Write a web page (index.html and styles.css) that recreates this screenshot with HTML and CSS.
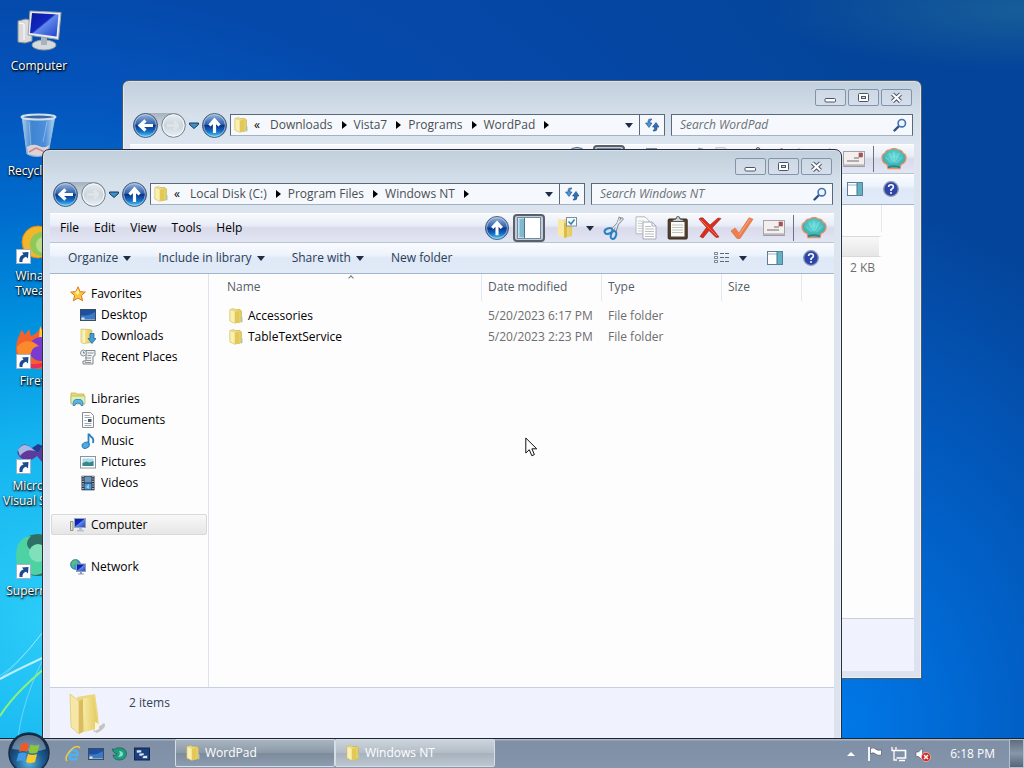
FILE: index.html
```html
<!DOCTYPE html>
<html lang="en">
<head>
    <meta charset="UTF-8">
    <meta name="viewport" content="width=device-width, initial-scale=1.0">
    <title>Windows NT</title>
    <link rel="stylesheet" href="styles.css">
</head>
<body>
    <!-- icon definitions -->
    <svg class="defs" aria-hidden="true">
        <defs>
            <linearGradient id="orbBlue" x1="0" y1="0" x2="0" y2="1">
                <stop offset="0" stop-color="#9db8dc"/>
                <stop offset=".45" stop-color="#2f62ae"/>
                <stop offset=".5" stop-color="#0b3284"/>
                <stop offset=".75" stop-color="#1470c8"/>
                <stop offset="1" stop-color="#5ad4fa"/>
            </linearGradient>
            <linearGradient id="glass" x1="0" y1="0" x2="0" y2="1">
                <stop offset="0" stop-color="#e6ecf1"/>
                <stop offset=".5" stop-color="#ccd5dd"/>
                <stop offset="1" stop-color="#e9eff4"/>
            </linearGradient>
            <linearGradient id="gold" x1="0" y1="0" x2="1" y2="0">
                <stop offset="0" stop-color="#f8edaa"/>
                <stop offset="1" stop-color="#e3c95a"/>
            </linearGradient>
            <linearGradient id="screen" x1="0" y1="0" x2="1" y2="1">
                <stop offset="0" stop-color="#0a1c9c"/>
                <stop offset=".45" stop-color="#1226c0"/>
                <stop offset=".5" stop-color="#5f88ea"/>
                <stop offset="1" stop-color="#2040cc"/>
            </linearGradient>
            <linearGradient id="bin" x1="0" y1="0" x2="1" y2="0">
                <stop offset="0" stop-color="#a9cdf0"/>
                <stop offset=".3" stop-color="#3f84d0"/>
                <stop offset=".7" stop-color="#4c8eda"/>
                <stop offset="1" stop-color="#b7d8f4"/>
            </linearGradient>
            <radialGradient id="shell" cx=".5" cy=".4" r=".6">
                <stop offset="0" stop-color="#6be0dc"/>
                <stop offset="1" stop-color="#2fa2a6"/>
            </radialGradient>
            <radialGradient id="start" cx=".5" cy=".75" r=".7">
                <stop offset="0" stop-color="#57b3dd"/>
                <stop offset=".5" stop-color="#1d5c92"/>
                <stop offset="1" stop-color="#0c2748"/>
            </radialGradient>
        </defs>

        <symbol id="i-back" viewBox="0 0 25 25">
            <circle cx="12.5" cy="12.5" r="12" fill="url(#orbBlue)" stroke="#4c6076"/>
            <circle cx="12.5" cy="12.5" r="10.8" fill="none" stroke="#c3d6ea" stroke-opacity=".7"/>
            <path d="M20 12.5H8M12.5 7.5L7 12.5l5.5 5" fill="none" stroke="#fff" stroke-width="3.2"/>
        </symbol>
        <symbol id="i-forward" viewBox="0 0 25 25">
            <circle cx="12.5" cy="12.5" r="11.8" fill="url(#glass)" stroke="#76828e"/>
            <circle cx="12.5" cy="12.5" r="10.5" fill="none" stroke="#f4f8fa"/>
            <path d="M6 12.5h11M13 8.5l4 4-4 4" fill="none" stroke="#dfe6eb" stroke-width="2.5"/>
        </symbol>
        <symbol id="i-up" viewBox="0 0 25 25">
            <circle cx="12.5" cy="12.5" r="12" fill="url(#orbBlue)" stroke="#4c6076"/>
            <circle cx="12.5" cy="12.5" r="10.8" fill="none" stroke="#c3d6ea" stroke-opacity=".7"/>
            <path d="M12.5 20V8M7.5 12.5l5-5.5 5 5.5" fill="none" stroke="#fff" stroke-width="3.2"/>
        </symbol>
        <symbol id="i-history" viewBox="0 0 10 7">
            <path d="M.5 1h9v1.500L5 6.500.5 2.500z" fill="#3d8fc4" stroke="#17375a"/>
        </symbol>
        <symbol id="i-folder" viewBox="0 0 16 16">
            <path d="M2 1.500l4-1 1 1h5l1.500 1.500v10l-2 1.500H6L2 13z" fill="url(#gold)" stroke="#c9b04c" stroke-width=".6"/>
            <path d="M2 1.500l5 1.500v12.500L2 13z" fill="#f9efae" stroke="#d8c260" stroke-width=".5"/>
            <path d="M7 4l4-1.500v12L7 15.500z" fill="#e2c858"/>
            <path d="M13 8.500l1.500 1v4L13 15z" fill="#a9c9b0"/>
        </symbol>
        <symbol id="i-refresh" viewBox="0 0 16 16">
            <path d="M8 2H6Q4 2 4 4.500V6H1.500L5 10.500 8 6H6V4.500z" fill="#4f93d0" stroke="#1f4e86" stroke-width=".6"/>
            <path d="M9 14h1.500Q13 14 13 11.500V10h2L12 5.500 8.500 10h2v2z" fill="#2f74ba" stroke="#17406f" stroke-width=".6"/>
        </symbol>
        <symbol id="i-search" viewBox="0 0 14 14">
            <path d="M1.500 12.500L6 8" stroke="#2f4f86" stroke-width="2.400" stroke-linecap="round"/>
            <circle cx="8.800" cy="5.200" r="3.700" fill="#eef6ff" stroke="#4272b4" stroke-width="1.600"/>
        </symbol>
        <symbol id="i-min" viewBox="0 0 13 11">
            <rect x="1" y="6.500" width="10.500" height="3.500" rx="1" fill="#fff" stroke="#4a5568"/>
        </symbol>
        <symbol id="i-max" viewBox="0 0 13 11">
            <rect x="1.500" y="1.500" width="10" height="8" rx="1" fill="#fff" stroke="#4a5568"/>
            <rect x="4.500" y="4.500" width="4" height="2" fill="#d4dde8" stroke="#4a5568"/>
        </symbol>
        <symbol id="i-close" viewBox="0 0 13 11">
            <path d="M2.500 2l8 7.500M10.500 2l-8 7.500" stroke="#4a5568" stroke-width="4.200"/>
            <path d="M2.500 2l8 7.500M10.500 2l-8 7.500" stroke="#fff" stroke-width="2.200"/>
        </symbol>

        <symbol id="i-pane" viewBox="0 0 24 22">
            <rect x=".5" y=".5" width="23" height="21" fill="#fff" stroke="#6d8ba2"/>
            <rect x="1.500" y="1.500" width="6" height="19" fill="#7fb9d0"/>
            <path d="M7.500 1v20" stroke="#48758e"/>
            <path d="M2 1.500v19" stroke="#c6e4ee"/>
        </symbol>
        <symbol id="i-props" viewBox="0 0 22 22">
            <path d="M2 2l5 1 2-1 7 1v16l-8 2-6-3z" fill="url(#gold)"/>
            <path d="M2 2l6 3v16l-6-3z" fill="#f7eaa0"/>
            <path d="M8 6l3-1v15l-3 1z" fill="#dcbc48"/>
            <rect x="10.500" y=".5" width="10" height="8.500" fill="#f6fafc" stroke="#7c8f9c"/>
            <path d="M12.500 4.500l2.500 2.500 3.500-4.500" fill="none" stroke="#2c83ac" stroke-width="1.500"/>
        </symbol>
        <symbol id="i-cut" viewBox="0 0 22 24">
            <path d="M9 14L20 2M12 16L17 1" stroke="#7d8894" stroke-width="2.600"/>
            <path d="M9.500 13.500L19.500 2.500M12 15L16.600 2" stroke="#e3e9ee" stroke-width="1.200"/>
            <ellipse cx="5.500" cy="15" rx="4" ry="2.600" transform="rotate(-20 5.500 15)" fill="none" stroke="#2a80c0" stroke-width="2"/>
            <ellipse cx="10.500" cy="19" rx="2.500" ry="4" transform="rotate(20 10.500 19)" fill="none" stroke="#2a80c0" stroke-width="2"/>
        </symbol>
        <symbol id="i-copy" viewBox="0 0 22 24">
            <path d="M1 .8h9l4 4v13H1z" fill="#fafafa" stroke="#b4babf"/>
            <path d="M3 5h6M3 7.500h8M3 10h8M3 12.500h8M3 15h8" stroke="#cdd2d6"/>
            <path d="M8 6h9l4 4v13H8z" fill="#fff" stroke="#a4abb2"/>
            <path d="M17 6v4h4" fill="none" stroke="#a4abb2"/>
            <path d="M10 10.500h6M10 13h9M10 15.500h9M10 18h9M10 20.500h9" stroke="#b8bec4"/>
        </symbol>
        <symbol id="i-paste" viewBox="0 0 22 24">
            <rect x="1.200" y="3" width="19" height="20" rx="1" fill="#54402e" stroke="#33261a"/>
            <rect x="4" y="6" width="13.500" height="14.500" fill="#fbfbf8"/>
            <path d="M5 9h11M5 11.500h11M5 14h11M5 16.500h11" stroke="#c2c2c0"/>
            <path d="M5 5.500Q6 3 9 3q0-2.500 2-2.500T13 3q3 0 4 2.500z" fill="#cfd2d4" stroke="#555"/>
        </symbol>
        <symbol id="i-delete" viewBox="0 0 24 22">
            <path d="M1 2q2-2 4-1l7 7 8-7 3 .5L14 11l7 9-3 .5-7-7-6 7.500-3-1.500 6.500-9z" fill="#d8301c" stroke="#a81a10" stroke-width=".6"/>
            <path d="M2.500 2.500L19 19" stroke="#f46a52" stroke-width="1"/>
        </symbol>
        <symbol id="i-check" viewBox="0 0 24 22">
            <path d="M1 14l4-3 4 5L19 .8l4 1.400L10 21.500H7z" fill="#ee7f4c" stroke="#d87444" stroke-width=".7"/>
            <path d="M9 18L20 2" stroke="#f8a67c" stroke-width="1"/>
        </symbol>
        <symbol id="i-mail" viewBox="0 0 22 16">
            <rect x=".5" y=".5" width="21" height="13.500" fill="#f2efee" stroke="#a6a3a6"/>
            <path d="M0 15.300h22" stroke="#8f8d92"/>
            <rect x="16" y="2" width="3.500" height="4" fill="#c5434e" stroke="#7d5b62" stroke-width=".6"/>
            <path d="M4 10h12M11 7h5" stroke="#9a979c" stroke-width="1.500"/>
        </symbol>
        <symbol id="i-shell" viewBox="0 0 26 22">
            <path d="M7 20.500l-1-4Q1 15 1 9.500q0-3 3-4.500 1-3 5-3.200Q11 .5 13 .5t4 1.300q4 .2 5 3.200 3 1.500 3 4.500 0 5.500-5 7l-1 4z" fill="url(#shell)" stroke="#ec9064" stroke-width="1.300"/>
            <path d="M4.500 9l6 6M8 5l4 9M13 3.500v11M18 5l-4 9M21.500 9l-6 6" stroke="#9df0ea" stroke-opacity=".5"/>
            <path d="M7 19.500q6-3 12 0" fill="none" stroke="#2a8088" stroke-width="1.600"/>
        </symbol>
        <symbol id="i-views" viewBox="0 0 16 12">
            <path d="M.5.5h3v2h-3zM.5 4.500h3v2h-3zM.5 8.500h3v2h-3z" fill="#fff" stroke="#5b6878" stroke-width=".8"/>
            <path d="M6 1.500h10M6 5.500h10M6 9.500h10" stroke="#5b6878" stroke-dasharray="4 1"/>
        </symbol>
        <symbol id="i-preview" viewBox="0 0 16 14">
            <rect x=".5" y=".5" width="15" height="13" fill="#fdfeff" stroke="#5c7f96"/>
            <path d="M1 3h9" stroke="#9db6c6"/>
            <rect x="10" y="1" width="5" height="12" fill="#5fb3c4"/>
            <path d="M10 1v12" stroke="#47758c"/>
        </symbol>
        <symbol id="i-help" viewBox="0 0 16 16">
            <circle cx="8" cy="8" r="7.300" fill="#2d45a8" stroke="#8b98b4" stroke-width="1.300"/>
            <path d="M5.600 6Q5.600 3.800 8 3.800T10.400 6Q10.400 7.200 8 8.600V10" fill="none" stroke="#fff" stroke-width="1.600"/>
            <circle cx="8" cy="12" r="1" fill="#fff"/>
        </symbol>

        <symbol id="i-star" viewBox="0 0 16 16">
            <path d="M8 .8l2.100 4.900 5.200.4-4 3.400 1.300 5.300L8 12l-4.600 2.800 1.300-5.300-4-3.400 5.200-.4z" fill="#fbc83c" stroke="#d9791f"/>
            <path d="M8 3l1.300 3.600L8 9 5 7z" fill="#fdf0a0"/>
        </symbol>
        <symbol id="i-desktop" viewBox="0 0 16 16">
            <rect x=".5" y="2.500" width="15" height="11" fill="#1f4f9f" stroke="#3c4c60"/>
            <path d="M1 12V8q6 2 14-3v7z" fill="#3a78c8"/>
            <path d="M1 12.500h14" stroke="#8ea4b9"/>
            <path d="M1.500 10.500h3v2h-3z" fill="#d9e8f5"/>
        </symbol>
        <symbol id="i-downloads" viewBox="0 0 16 16">
            <path d="M1 1l9 .5 2 1v12l-9 1L1 14z" fill="url(#gold)" stroke="#c9b04c" stroke-width=".6"/>
            <path d="M4 2v13" stroke="#f9f2bc" stroke-width="2"/>
            <path d="M10 5.500h4v5h2L12 15.500l-4-5h2z" fill="#3f9fd8" stroke="#1f5f9c" stroke-width=".7"/>
        </symbol>
        <symbol id="i-recent" viewBox="0 0 16 16">
            <path d="M6 1.500h9v5l-2 1v7.500H3v-3h3z" fill="#f1f1f1" stroke="#7f878f"/>
            <path d="M7.500 4h6M7.500 6.500h4M5 9h6M5 11.500h6M5 13.500h6" stroke="#8d959d"/>
            <circle cx="3.500" cy="4" r="3" fill="#e8edf0" stroke="#89929a"/>
            <path d="M3.500 2.500V4H5" fill="none" stroke="#55606a" stroke-width=".8"/>
        </symbol>
        <symbol id="i-libraries" viewBox="0 0 16 16">
            <path d="M1 2h5l1 1h7v9H1z" fill="#f0d970" stroke="#c7a93a" stroke-width=".7"/>
            <path d="M1 5h14v8H1z" fill="#dcefb4" stroke="#a8b960" stroke-width=".7"/>
            <path d="M3 14.500Q3 8.500 6 8.500h4q3 0 3 6h-2Q11 12 8 12t-3 2.500z" fill="#5cb3e4" stroke="#2b7cba" stroke-width=".8"/>
        </symbol>
        <symbol id="i-documents" viewBox="0 0 16 16">
            <path d="M2.500.5h8l3 3v12h-11z" fill="#fcfcfc" stroke="#858c94"/>
            <path d="M4.500 3.500h5M4.500 5.500h7M4.500 11.500h7M4.500 13.500h7M4.500 8.500h2" stroke="#a2a9b1"/>
            <rect x="8" y="7" width="3.500" height="3" fill="#4b5a74"/>
        </symbol>
        <symbol id="i-music" viewBox="0 0 16 16">
            <path d="M9 1q1 2 3 3.500T13 10" fill="none" stroke="#2f7fc0" stroke-width="1.800"/>
            <path d="M8.500 12V.5" stroke="#2f7fc0" stroke-width="1.800"/>
            <ellipse cx="5.700" cy="12.300" rx="3.800" ry="3" transform="rotate(-20 5.700 12.300)" fill="#4ea9e0" stroke="#226ca8" stroke-width=".8"/>
        </symbol>
        <symbol id="i-pictures" viewBox="0 0 16 16">
            <rect x=".5" y="2.500" width="15" height="11.500" fill="#fff" stroke="#8a949e"/>
            <rect x="2.500" y="4.500" width="11" height="7.500" fill="#a8dcea"/>
            <path d="M2.500 12V9l4-1.500 3 1 4-1.500v5z" fill="#3a8588"/>
        </symbol>
        <symbol id="i-videos" viewBox="0 0 16 16">
            <rect x="1.500" y=".8" width="13" height="14.500" fill="#23313f"/>
            <path d="M3 1v14M13 1v14" stroke="#dfe8ee" stroke-width="1.300" stroke-dasharray="1.200 1.200"/>
            <rect x="4.500" y="1.500" width="7" height="6" fill="#6b95bc"/>
            <rect x="4.500" y="8.500" width="7" height="6" fill="#4c9ad6"/>
            <path d="M6 12l3-3v5z" fill="#8fd0f4"/>
        </symbol>
        <symbol id="i-computer" viewBox="0 0 16 16">
            <path d="M.5 4.500h2.500v9H.5z" fill="#dfe6d8" stroke="#77826c" stroke-width=".8"/>
            <rect x="4.500" y="1.500" width="11" height="9" fill="url(#screen)" stroke="#9aa6b6"/>
            <path d="M9 11h3v2h2v1.500H7V13h2z" fill="#b9c2cc"/>
        </symbol>
        <symbol id="i-network" viewBox="0 0 16 16">
            <circle cx="5.500" cy="5.500" r="5" fill="#3a9cc8" stroke="#1f6a8c" stroke-width=".6"/>
            <path d="M2 3q3-3 5-1 1 2-2 3-2 1-1 4Q1 7 2 3z" fill="#5cc06c"/>
            <rect x="6.500" y="5" width="9" height="7.500" fill="url(#screen)" stroke="#8f9db2"/>
            <path d="M10 13h2v1.500h2v1H8v-1h2z" fill="#8f9db2"/>
        </symbol>

        <symbol id="i-link" viewBox="0 0 15 15">
            <rect x=".5" y=".5" width="14" height="14" fill="#fff" stroke="#9fb4c8"/>
            <path d="M3.500 13Q2.500 7 7.500 5.500L6 3.500l6.500-.5-.5 6.500-2-1.800Q6 9 6.500 13z" fill="#1c4b8f"/>
        </symbol>
    </svg>

    <main class="desktop">
        <!-- light streaks of the wallpaper -->
        <svg class="streaks" viewBox="0 0 200 200" fill="none" aria-hidden="true">
            <path d="M0 141Q20 130 60 112" stroke="#fff" stroke-opacity=".7" stroke-width="2"/>
            <path d="M0 138Q40 110 90 20M0 141Q30 115 60 70M18 200Q24 150 60 90" stroke="#d8f8ff" stroke-opacity=".4"/>
            <path d="M0 178Q16 152 60 118" stroke="#8df27a" stroke-width="2"/>
        </svg>

        <ul class="icons">
            <li>
                <svg viewBox="0 0 48 48">
                    <path d="M3 13l8-2 6 2v20l-7 2-7-1z" fill="#d9dadb" stroke="#8b8f94"/>
                    <path d="M4 15l5 1v16" fill="none" stroke="#fff"/>
                    <ellipse cx="29" cy="37" rx="12" ry="5" fill="#d5dade" stroke="#959ca4"/>
                    <path d="M26 29h6v8h-6z" fill="#aab2ba"/>
                    <path d="M15 3l31 1.500-2.500 27L13 27z" fill="#e9ebee" stroke="#9aa2ac"/>
                    <path d="M17 5l26.500 1.500-2 22L15 25z" fill="url(#screen)"/>
                </svg>
                <span>Computer</span>
            </li>
            <li>
                <svg viewBox="0 0 48 48">
                    <path d="M7 3l5 38q9 5 21 0l7-38z" fill="url(#bin)" stroke="#9cbadb"/>
                    <path d="M12 34q6-4 12-1t10-1l-2 9q-9 4-19 0z" fill="#ddd2d6"/>
                    <path d="M14 39l7-4 9 4" fill="none" stroke="#c78a86" stroke-width="1.500"/>
                    <ellipse cx="23.500" cy="4" rx="17" ry="2.500" fill="#39679f" stroke="#cfe0ef" stroke-width="2"/>
                    <path d="M14 9l2 24M32 9l-4 20" stroke="#d7eafa" stroke-opacity=".4"/>
                </svg>
                <span>Recycle Bin</span>
            </li>
            <li>
                <svg viewBox="0 0 48 48">
                    <circle cx="23" cy="24" r="16" fill="#f2b62c" stroke="#dc8d18"/>
                    <circle cx="27" cy="26" r="12" fill="#8fc85a"/>
                    <circle cx="29" cy="27" r="8" fill="#b9dc86"/>
                    <use href="#i-link" x="1" y="31" width="15" height="15"/>
                </svg>
                <span>Winaero Tweaker</span>
            </li>
            <li>
                <svg viewBox="0 0 48 48">
                    <path d="M4 13q2-6 3-6l3 5 4-6 2 7q6-2 10-9 2 6 8 9 12 8 7 22-6 12-18 11Q4 44 1 28q0-10 3-15z" fill="#f4622c"/>
                    <path d="M25 3q3 8 9 10 10 7 8 19-6-12-18-16z" fill="#fdc934"/>
                    <circle cx="26" cy="26" r="12" fill="#7a3bd0"/>
                    <path d="M2 24q6-8 16-5l6 4q-7 1-8 7Q8 38 3 32z" fill="#fb8a2c"/>
                    <path d="M5 37q12 8 28 1-6 9-17 7-8-2-11-8z" fill="#ec2c58"/>
                    <use href="#i-link" x="1" y="31" width="15" height="15"/>
                </svg>
                <span>Firefox</span>
            </li>
            <li>
                <svg viewBox="0 0 48 48">
                    <path d="M3 22q5-9 12-3l8 6 9-12 9 4v20l-9 3-10-12q-9 8-16 2-5-4-3-8z" fill="#5f3a9c"/>
                    <path d="M3 22q5-8 12-3l5 4q-9-3-15 5z" fill="#a9b8e0"/>
                    <path d="M17 20l6 5 5-7-5-2z" fill="#243a8c"/>
                    <use href="#i-link" x="1" y="31" width="15" height="15"/>
                </svg>
                <span>Microsoft Visual Studio</span>
            </li>
            <li>
                <svg viewBox="0 0 48 48">
                    <circle cx="23" cy="22" r="21" fill="#2f6f66"/>
                    <path d="M1 24Q1 4 16 3q-8 8 0 14t22 7q-4 17-18 18Q1 40 1 24z" fill="#4dd2a4"/>
                    <circle cx="23" cy="20" r="9" fill="#7fe0ba"/>
                    <use href="#i-link" x="1" y="31" width="15" height="15"/>
                </svg>
                <span>Supermium</span>
            </li>
        </ul>

        <!-- WordPad folder window -->
        <section class="window window-back">
            <header class="titlebar">
                <button type="button" aria-label="Minimize"><svg><use href="#i-min"/></svg></button>
                <button type="button" aria-label="Maximize"><svg><use href="#i-max"/></svg></button>
                <button type="button" aria-label="Close"><svg><use href="#i-close"/></svg></button>
            </header>
            <div class="navbar">
                <div class="pair">
                    <button type="button" class="round" aria-label="Back"><svg><use href="#i-back"/></svg></button>
                    <button type="button" class="round" aria-label="Forward"><svg><use href="#i-forward"/></svg></button>
                </div>
                <button type="button" class="history" aria-label="Recent pages"><svg><use href="#i-history"/></svg></button>
                <button type="button" class="round" aria-label="Up"><svg><use href="#i-up"/></svg></button>
                <nav class="address">
                    <svg class="icon"><use href="#i-folder"/></svg>
                    <button type="button" class="more">«</button>
                    <button type="button">Downloads</button><i class="right"></i>
                    <button type="button">Vista7</button><i class="right"></i>
                    <button type="button">Programs</button><i class="right"></i>
                    <button type="button">WordPad</button><i class="right"></i>
                    <button type="button" class="drop" aria-label="Previous locations"><i class="down"></i></button>
                    <button type="button" class="refresh" aria-label="Refresh"><svg class="icon"><use href="#i-refresh"/></svg></button>
                </nav>
                <label class="search">
                    <input type="text" placeholder="Search WordPad" aria-label="Search WordPad">
                    <svg><use href="#i-search"/></svg>
                </label>
            </div>
            <div class="client">
                <div class="menubar">
                    <div class="tools">
                        <button type="button" aria-label="Up"><svg class="t-up"><use href="#i-up"/></svg></button>
                        <button type="button" class="pressed" aria-label="Navigation pane"><svg class="t-pane"><use href="#i-pane"/></svg></button>
                        <button type="button" class="split" aria-label="Properties"><svg class="t-props"><use href="#i-props"/></svg><i class="down"></i></button>
                        <button type="button" aria-label="Cut"><svg class="t-tall"><use href="#i-cut"/></svg></button>
                        <button type="button" aria-label="Copy"><svg class="t-tall"><use href="#i-copy"/></svg></button>
                        <button type="button" aria-label="Paste"><svg class="t-tall"><use href="#i-paste"/></svg></button>
                        <button type="button" aria-label="Delete"><svg class="t-wide"><use href="#i-delete"/></svg></button>
                        <button type="button" aria-label="Select"><svg class="t-wide"><use href="#i-check"/></svg></button>
                        <button type="button" aria-label="Mail"><svg class="t-mail"><use href="#i-mail"/></svg></button>
                        <span class="sep"></span>
                        <button type="button" aria-label="Classic Shell"><svg class="t-shell"><use href="#i-shell"/></svg></button>
                    </div>
                </div>
                <div class="commands">
                    <div class="view-tools">
                        <button type="button" aria-label="Preview pane"><svg class="preview"><use href="#i-preview"/></svg></button>
                        <button type="button" aria-label="Help"><svg class="icon"><use href="#i-help"/></svg></button>
                    </div>
                </div>
                <div class="content">
                    <div class="tree"></div>
                    <div class="list">
                        <table class="files">
                            <thead>
                                <tr><th class="c-name"></th><th></th><th></th><th class="c-size"></th></tr>
                            </thead>
                            <tbody>
                                <tr class="selected"><td></td><td></td><td></td><td></td></tr>
                                <tr><td></td><td></td><td></td><td class="size">2 KB</td></tr>
                            </tbody>
                        </table>
                    </div>
                </div>
                <footer class="details"></footer>
            </div>
        </section>

        <!-- Windows NT folder window -->
        <section class="window window-front">
            <header class="titlebar">
                <button type="button" aria-label="Minimize"><svg><use href="#i-min"/></svg></button>
                <button type="button" aria-label="Maximize"><svg><use href="#i-max"/></svg></button>
                <button type="button" aria-label="Close"><svg><use href="#i-close"/></svg></button>
            </header>
            <div class="navbar">
                <div class="pair">
                    <button type="button" class="round" aria-label="Back"><svg><use href="#i-back"/></svg></button>
                    <button type="button" class="round" aria-label="Forward"><svg><use href="#i-forward"/></svg></button>
                </div>
                <button type="button" class="history" aria-label="Recent pages"><svg><use href="#i-history"/></svg></button>
                <button type="button" class="round" aria-label="Up"><svg><use href="#i-up"/></svg></button>
                <nav class="address">
                    <svg class="icon"><use href="#i-folder"/></svg>
                    <button type="button" class="more">«</button>
                    <button type="button">Local Disk (C:)</button><i class="right"></i>
                    <button type="button">Program Files</button><i class="right"></i>
                    <button type="button">Windows NT</button><i class="right"></i>
                    <button type="button" class="drop" aria-label="Previous locations"><i class="down"></i></button>
                    <button type="button" class="refresh" aria-label="Refresh"><svg class="icon"><use href="#i-refresh"/></svg></button>
                </nav>
                <label class="search">
                    <input type="text" placeholder="Search Windows NT" aria-label="Search Windows NT">
                    <svg><use href="#i-search"/></svg>
                </label>
            </div>
            <div class="client">
                <div class="menubar">
                    <div class="menus">
                        <button type="button">File</button>
                        <button type="button">Edit</button>
                        <button type="button">View</button>
                        <button type="button">Tools</button>
                        <button type="button">Help</button>
                    </div>
                    <div class="tools">
                        <button type="button" aria-label="Up"><svg class="t-up"><use href="#i-up"/></svg></button>
                        <button type="button" class="pressed" aria-label="Navigation pane"><svg class="t-pane"><use href="#i-pane"/></svg></button>
                        <button type="button" class="split" aria-label="Properties"><svg class="t-props"><use href="#i-props"/></svg><i class="down"></i></button>
                        <button type="button" aria-label="Cut"><svg class="t-tall"><use href="#i-cut"/></svg></button>
                        <button type="button" aria-label="Copy"><svg class="t-tall"><use href="#i-copy"/></svg></button>
                        <button type="button" aria-label="Paste"><svg class="t-tall"><use href="#i-paste"/></svg></button>
                        <button type="button" aria-label="Delete"><svg class="t-wide"><use href="#i-delete"/></svg></button>
                        <button type="button" aria-label="Select"><svg class="t-wide"><use href="#i-check"/></svg></button>
                        <button type="button" aria-label="Mail"><svg class="t-mail"><use href="#i-mail"/></svg></button>
                        <span class="sep"></span>
                        <button type="button" aria-label="Classic Shell"><svg class="t-shell"><use href="#i-shell"/></svg></button>
                    </div>
                </div>
                <div class="commands">
                    <button type="button">Organize<i class="down"></i></button>
                    <button type="button">Include in library<i class="down"></i></button>
                    <button type="button">Share with<i class="down"></i></button>
                    <button type="button">New folder</button>
                    <div class="view-tools">
                        <button type="button" aria-label="Change your view"><svg class="views"><use href="#i-views"/></svg><i class="down"></i></button>
                        <button type="button" aria-label="Preview pane"><svg class="preview"><use href="#i-preview"/></svg></button>
                        <button type="button" aria-label="Help"><svg class="icon"><use href="#i-help"/></svg></button>
                    </div>
                </div>
                <div class="content">
                    <div class="tree">
                        <ul>
                            <li class="root"><svg class="icon"><use href="#i-star"/></svg>Favorites</li>
                            <li><svg class="icon"><use href="#i-desktop"/></svg>Desktop</li>
                            <li><svg class="icon"><use href="#i-downloads"/></svg>Downloads</li>
                            <li><svg class="icon"><use href="#i-recent"/></svg>Recent Places</li>
                        </ul>
                        <ul>
                            <li class="root"><svg class="icon"><use href="#i-libraries"/></svg>Libraries</li>
                            <li><svg class="icon"><use href="#i-documents"/></svg>Documents</li>
                            <li><svg class="icon"><use href="#i-music"/></svg>Music</li>
                            <li><svg class="icon"><use href="#i-pictures"/></svg>Pictures</li>
                            <li><svg class="icon"><use href="#i-videos"/></svg>Videos</li>
                        </ul>
                        <ul>
                            <li class="root current"><svg class="icon"><use href="#i-computer"/></svg>Computer</li>
                        </ul>
                        <ul>
                            <li class="root"><svg class="icon"><use href="#i-network"/></svg>Network</li>
                        </ul>
                    </div>
                    <div class="list">
                        <table class="files">
                            <thead>
                                <tr>
                                    <th class="c-name">Name<i class="sort"></i></th>
                                    <th>Date modified</th>
                                    <th>Type</th>
                                    <th class="c-size">Size</th>
                                </tr>
                            </thead>
                            <tbody>
                                <tr>
                                    <td class="name"><svg class="icon"><use href="#i-folder"/></svg>Accessories</td>
                                    <td>5/20/2023 6:17 PM</td>
                                    <td>File folder</td>
                                    <td></td>
                                </tr>
                                <tr>
                                    <td class="name"><svg class="icon"><use href="#i-folder"/></svg>TableTextService</td>
                                    <td>5/20/2023 2:23 PM</td>
                                    <td>File folder</td>
                                    <td></td>
                                </tr>
                            </tbody>
                        </table>
                    </div>
                </div>
                <footer class="details">
                    <svg viewBox="0 0 40 42">
                        <path d="M24 38l11-8q4 4-7 10z" fill="#9a948c" fill-opacity=".5"/>
                        <path d="M8 4l18-3 3 20 1 14-20 5z" fill="#ecd684"/>
                        <path d="M13 6l12-3 4 32-13 4z" fill="url(#gold)"/>
                        <path d="M1 1l9 7v33l-8-7z" fill="#f6e7a6" stroke="#e0c976" stroke-width=".8"/>
                        <path d="M10 8l4-2v33l-4 2z" fill="#d9bc60"/>
                        <path d="M26 29l4 2v5l-4 2z" fill="#f7f4e6"/>
                    </svg>
                    <span>2 items</span>
                </footer>
            </div>
        </section>

        <!-- mouse pointer -->
        <svg class="cursor" viewBox="0 0 13 20" aria-hidden="true">
            <path d="M.8 1v15l3.500-3.300 2.500 6 2.600-1.100-2.500-5.800h4.800z" fill="#fff" stroke="#111"/>
        </svg>
    </main>

    <footer class="taskbar">
        <button type="button" class="start" aria-label="Start">
            <svg viewBox="0 0 42 42">
                <circle cx="21" cy="21" r="20" fill="url(#start)" stroke="#182c44" stroke-width="1.500"/>
                <path d="M4 17Q7 3 21 3t17 14q-8 3-17 2T4 17z" fill="#fff" fill-opacity=".35"/>
                <path d="M13 12q4-2 8 0l-2 8q-4-2-8 0z" fill="#ee5a24"/>
                <path d="M22.500 12.500q4 2 9 0l-2 8q-5 2-9 0z" fill="#8cc63c"/>
                <path d="M10.500 21.500q4-2 8 0l-2 8q-4-2-8 0z" fill="#3f9be8"/>
                <path d="M20 22q4 2 9 0l-2 8q-5 2-9 0z" fill="#fccb26"/>
            </svg>
        </button>
        <div class="quick">
            <button type="button" aria-label="Internet Explorer">
                <svg class="icon" viewBox="0 0 16 16">
                    <path d="M4 9h8.500Q13 4 8.500 4 4 4.500 4 9q.5 4.500 5 4.500 2.500 0 3.500-2" fill="none" stroke="#4fb2ee" stroke-width="2.400"/>
                    <path d="M2 15Q-1 12 5 5t10-3" fill="none" stroke="#f2c83c" stroke-width="1.500"/>
                </svg>
            </button>
            <button type="button" aria-label="Show desktop"><svg class="icon"><use href="#i-desktop"/></svg></button>
            <button type="button" aria-label="Supermium">
                <svg class="icon" viewBox="0 0 16 16">
                    <path d="M1 3q3 1 5-1 9-1 9.500 5.500Q15 14 8 14q-5 0-6-5 3 1 4-1-4-1-5-5z" fill="#1f9c80" stroke="#145c4e" stroke-width=".7"/>
                    <path d="M8 5q4 0 4 3t-5 3q3-3 1-6z" fill="#7fe4be"/>
                </svg>
            </button>
            <button type="button" aria-label="Switch between windows">
                <svg class="icon" viewBox="0 0 16 16">
                    <rect x=".5" y="2" width="15" height="12" fill="#1c3f80" stroke="#0f2750"/>
                    <path d="M2.500 4h5v3h-5zM5 7h5v3H5zM8.500 9.500h5v3h-5z" fill="#dbe8f6" stroke="#1c3f80" stroke-width=".6"/>
                </svg>
            </button>
        </div>
        <div class="tasks">
            <button type="button"><svg class="icon"><use href="#i-folder"/></svg>WordPad</button>
            <button type="button" class="active"><svg class="icon"><use href="#i-folder"/></svg>Windows NT</button>
        </div>
        <div class="tray">
            <i class="up"></i>
            <svg class="icon" viewBox="0 0 16 16">
                <path d="M2 1v14" stroke="#fff" stroke-width="1.800"/>
                <path d="M3.500 2.500q3-1.500 5 .5t6 1v5q-4 1-6-1t-5-.5z" fill="#fff" stroke="#3f4a58" stroke-width=".6"/>
            </svg>
            <svg class="icon" viewBox="0 0 16 16">
                <path d="M5.500 4.500h9v7.500h-9M8 14.500h6" fill="none" stroke="#fff" stroke-width="1.600"/>
                <path d="M1 1v3.500h4V1M3 4.500V14h3" fill="none" stroke="#fff" stroke-width="1.300"/>
            </svg>
            <svg class="icon" viewBox="0 0 16 16">
                <path d="M1 6h2.500L7.500 2v12L3.500 10.500H1z" fill="#fff" stroke="#4a5666" stroke-width=".6"/>
                <circle cx="11" cy="11" r="4.600" fill="#d02a22" stroke="#f1c3bd" stroke-width=".7"/>
                <path d="M9 9l4 4M13 9l-4 4" stroke="#fff" stroke-width="1.500"/>
            </svg>
            <time>6:18 PM</time>
            <button type="button" class="peek" aria-label="Show desktop"></button>
        </div>
    </footer>
</body>
</html>
```

FILE: styles.css
```css
* {
    box-sizing: border-box;
}
body {
    margin: 0;
    height: 100vh;
    display: flex;
    flex-direction: column;
    overflow: hidden;
    font-family: "Open Sans", "Noto Sans", sans-serif;
    font-size: 12px;
    line-height: 16px;
    color: #000;
}
button,
input {
    margin: 0;
    padding: 0;
    border: 0;
    background: none;
    font: inherit;
    color: inherit;
}
ul {
    list-style: none;
    margin: 0;
    padding: 0;
}
svg {
    display: block;
    flex: none;
}
.defs {
    position: absolute;
    width: 0;
    height: 0;
}
.icon {
    width: 16px;
    height: 16px;
}

/* small triangles */
.down,
.up,
.right {
    display: block;
    flex: none;
    width: 0;
    height: 0;
}
.down {
    border: 4px solid transparent;
    border-top: 5px solid #1e2c44;
    border-bottom: 0;
}
.up {
    border: 4px solid transparent;
    border-bottom: 4px solid #fff;
    border-top: 0;
}
.right {
    border: 4px solid transparent;
    border-left: 5px solid #000;
    border-right: 0;
}

/* desktop */
.desktop {
    position: relative;
    flex: 1;
    min-height: 0;
    overflow: hidden;
    background:
        radial-gradient(ellipse 260px 60px at 100% 10px, rgba(60, 140, 150, 0.35), transparent),
        radial-gradient(ellipse 420px 520px at 82% 98%, #0078e8, rgba(0, 110, 220, 0.7) 40%, rgba(0, 90, 190, 0) 100%),
        radial-gradient(circle at 50px 620px, #2ccdf8 0, #14b4f0 180px, #0090de 300px, #006ccd 410px, #0455bd 520px, #0549ab 630px, #04449a 1000px);
}
.streaks {
    position: absolute;
    left: 0;
    bottom: 0;
    width: 200px;
    height: 200px;
}
.icons {
    position: relative;
    width: 74px;
    margin-left: 2px;
    padding-top: 8px;
    color: #fff;
    text-align: center;
    text-shadow: 0 1px 2px #000, 1px 1px 2px #000;
    line-height: 15px;
}
.icons li {
    height: 105px;
    display: flex;
    flex-direction: column;
    align-items: center;
}
.icons svg {
    width: 48px;
    height: 48px;
    margin-bottom: 2px;
}

/* explorer window */
.window {
    position: absolute;
    width: 800px;
    height: 599px;
    display: flex;
    flex-direction: column;
    padding: 0 7px 7px;
    border: 1px solid #4b5b6c;
    border-radius: 7px 7px 0 0;
    background: linear-gradient(#c1cfdc, #d5e0eb 34px, #dce5ef 64px, #dde3ee);
    box-shadow: inset 0 0 0 1px rgba(255, 255, 255, 0.4);
}
.window-back {
    left: 122px;
    top: 80px;
}
.window-front {
    left: 42px;
    top: 149px;
    border-color: #27313d;
}
.titlebar {
    display: flex;
    justify-content: flex-end;
    gap: 2px;
    padding: 8px 2px 1px;
}
.titlebar button {
    width: 31px;
    height: 17px;
    display: flex;
    align-items: center;
    justify-content: center;
    border: 1px solid #8494a8;
    border-radius: 2px;
    background: linear-gradient(#cdd8e5, #d5dfeb);
}
.titlebar svg {
    width: 13px;
    height: 11px;
}
.navbar {
    display: flex;
    align-items: center;
    gap: 3px;
    height: 37px;
    padding: 0 1px 1px 3px;
}
.pair {
    display: flex;
    gap: 3px;
    border-radius: 13px;
    background: linear-gradient(#a5b2bf, #ccd6df 50%, transparent 50%);
}
.round,
.round svg {
    display: block;
    width: 25px;
    height: 25px;
}
.history svg {
    width: 10px;
    height: 7px;
}
.address {
    flex: 1;
    display: flex;
    align-items: center;
    height: 22px;
    padding-left: 2px;
    border: 1px solid #58697c;
    border-bottom-color: #a3b1c0;
    background: #f5f9fd;
    color: #4a4e54;
}
.address button {
    padding: 0 9px 0 7px;
}
.address .more {
    padding: 0 3px 0 5px;
    color: #000;
}
.address .drop {
    margin-left: auto;
    padding: 0 6px;
}
.address .refresh {
    height: 20px;
    padding: 0 4px;
    border-left: 1px solid #58697c;
}
.search {
    display: flex;
    align-items: center;
    width: 242px;
    height: 22px;
    margin-left: 3px;
    padding: 0 5px 0 8px;
    border: 1px solid #58697c;
    border-bottom-color: #a3b1c0;
    background: #f5f9fd;
}
.search input {
    flex: 1;
    min-width: 0;
}
.search input::placeholder {
    color: #6c7075;
    font-style: italic;
    opacity: 1;
}
.search svg {
    width: 14px;
    height: 14px;
}
.client {
    flex: 1;
    min-height: 0;
    display: flex;
    flex-direction: column;
    background: #fdfdfe;
}

/* menu and toolbar */
.menubar {
    display: flex;
    align-items: center;
    justify-content: space-between;
    height: 30px;
    border-top: 1px solid #fff;
    border-bottom: 1px solid #b9c3d4;
    background: linear-gradient(#f7f9fd, #e9edf7 40%, #d9daeb 50%, #e2e6f3);
}
.menus {
    display: flex;
    gap: 15px;
    padding-left: 10px;
}
.tools {
    display: flex;
    align-items: center;
    margin-left: auto;
    padding-right: 4px;
}
.tools button {
    width: 32px;
    height: 28px;
    display: flex;
    align-items: center;
    justify-content: center;
}
.tools .pressed {
    border: 2px solid #5a5f69;
    border-radius: 4px;
    background: #c4cad6;
}
.tools .split {
    width: 53px;
    gap: 8px;
    padding-left: 6px;
}
.sep {
    width: 1px;
    height: 26px;
    margin: 0 4px 0 3px;
    background: #6b7484;
}
.t-up {
    width: 24px;
    height: 24px;
}
.t-pane {
    width: 24px;
    height: 22px;
}
.t-props {
    width: 22px;
    height: 22px;
}
.t-tall {
    width: 22px;
    height: 24px;
}
.t-wide {
    width: 24px;
    height: 22px;
}
.t-mail {
    width: 22px;
    height: 16px;
}
.t-shell {
    width: 26px;
    height: 22px;
}
.commands {
    display: flex;
    align-items: center;
    gap: 27px;
    height: 31px;
    padding: 0 15px 0 18px;
    border-bottom: 1px solid #a4b4cb;
    background: linear-gradient(#fafcff, #edf3fc 40%, #dfe8f6 50%, #e1eaf7);
    color: #2b3c56;
}
.commands button {
    display: flex;
    align-items: center;
    gap: 5px;
}
.view-tools {
    display: flex;
    align-items: center;
    gap: 20px;
    margin-left: auto;
}
.view-tools button {
    gap: 9px;
}
.views {
    width: 16px;
    height: 12px;
}
.preview {
    width: 16px;
    height: 14px;
}

/* panes */
.content {
    flex: 1;
    min-height: 0;
    display: flex;
}
.tree {
    width: 159px;
    padding: 9px 1px 0;
    border-right: 1px solid #dce3ee;
}
.tree ul {
    margin-bottom: 21px;
}
.tree li {
    display: flex;
    align-items: center;
    gap: 5px;
    height: 21px;
    padding-left: 29px;
}
.tree .root {
    padding-left: 19px;
}
.tree .current {
    padding-left: 18px;
    border: 1px solid #d9d9d9;
    border-radius: 2px;
    background: linear-gradient(#f8f8f8, #e6e6e6);
}
.list {
    flex: 1;
    padding-left: 8px;
}
.files {
    width: 585px;
    table-layout: fixed;
    border-collapse: separate;
    border-spacing: 0;
    color: #6d6d6d;
}
.files th {
    position: relative;
    width: 120px;
    height: 27px;
    padding: 0 0 2px 6px;
    border-right: 1px solid #e3e8ee;
    color: #555d69;
    font-weight: normal;
    text-align: left;
}
.files .c-name {
    width: 265px;
    padding-left: 10px;
}
.files .c-size {
    width: 80px;
}
.sort {
    position: absolute;
    left: 50%;
    top: 2px;
    width: 4px;
    height: 4px;
    border-top: 1px solid #6b7a8c;
    border-left: 1px solid #6b7a8c;
    transform: rotate(45deg);
}
.files tbody::before {
    content: "";
    display: block;
    height: 4px;
}
.files td {
    height: 21px;
    padding: 0 0 0 6px;
    white-space: nowrap;
}
.files .name {
    display: flex;
    align-items: center;
    gap: 4px;
    padding-left: 11px;
    color: #000;
}
.files .size {
    padding-right: 7px;
    text-align: right;
}
.files .selected td {
    border-top: 1px solid #d9d9d9;
    border-bottom: 1px solid #d9d9d9;
    background: linear-gradient(#f8f8f8, #e6e6e6);
}
.files .selected td:last-child {
    border-right: 3px solid #fdfdfe;
}
.details {
    display: flex;
    gap: 20px;
    height: 53px;
    padding: 5px 19px 0;
    border-top: 1px solid #c9d0dd;
    background: #f0f3fd;
    color: #33415a;
}
.details svg {
    width: 40px;
    height: 42px;
}
.details span {
    padding-top: 2px;
}
.cursor {
    position: absolute;
    left: 525px;
    top: 437px;
    width: 13px;
    height: 20px;
}

/* taskbar */
.taskbar {
    position: relative;
    display: flex;
    height: 30px;
    padding-left: 65px;
    border-top: 1px solid #1d2733;
    background: linear-gradient(#a9b6c6 1px, #7f8fa5 2px, #8495ac);
    color: #fff;
}
.start {
    position: absolute;
    left: 8px;
    top: -7px;
}
.start svg {
    width: 42px;
    height: 42px;
}
.quick {
    display: flex;
    align-items: center;
    gap: 7px;
    width: 110px;
}
.tasks {
    display: flex;
    padding-bottom: 1px;
}
.tasks button {
    display: flex;
    align-items: center;
    gap: 4px;
    width: 160px;
    padding-left: 9px;
    border: 1px solid #d5dde6;
    border-radius: 2px;
    background: linear-gradient(#a9b4c0, #8b99a8 50%, #7c8b9c 50%, #8d9cae);
}
.tasks .active {
    background: linear-gradient(#ccd3db, #b3bdc7 50%, #a6b1bd 50%, #bcc6cf);
}
.tray {
    display: flex;
    align-items: center;
    gap: 8px;
    margin-left: auto;
}
.tray .up {
    margin-right: 4px;
}
.tray time {
    padding: 0 6px 0 11px;
}
.peek {
    width: 15px;
    height: 100%;
    border: 1px solid #b4c0ce;
    background: linear-gradient(#5e6d80, #8796a8 50%, #56657a);
}
```
